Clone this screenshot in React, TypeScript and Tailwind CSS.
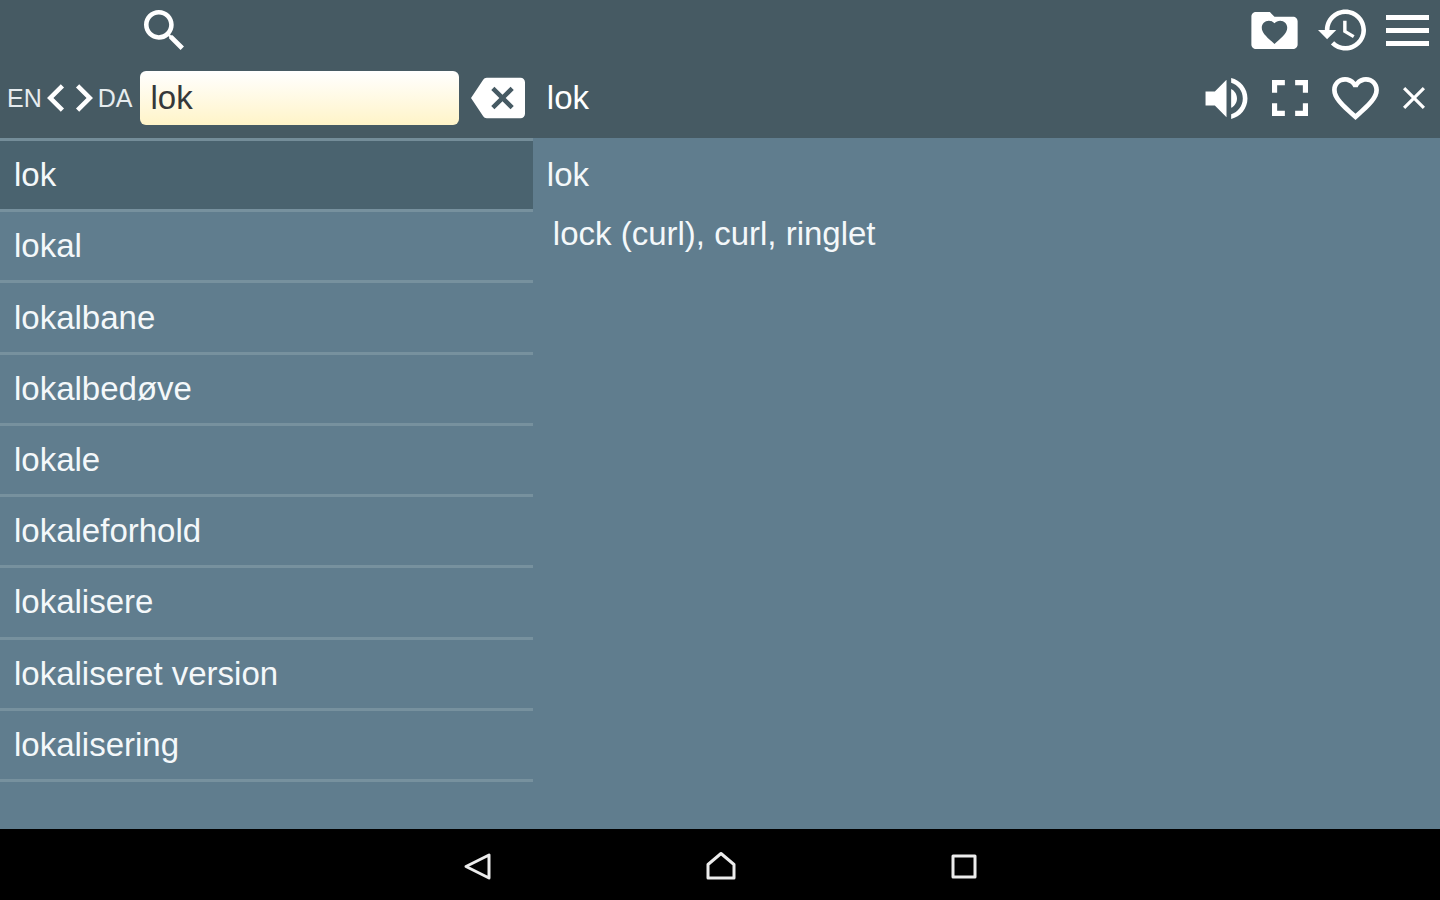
import React, { useState } from 'react';

const WORDS = [
  'lok',
  'lokal',
  'lokalbane',
  'lokalbedøve',
  'lokale',
  'lokaleforhold',
  'lokalisere',
  'lokaliseret version',
  'lokalisering',
];

const ICONS = {
  search: {
    box: '3 3 17.5 17.5',
    d: 'M15.5 14h-.79l-.28-.27C15.41 12.59 16 11.11 16 9.5 16 5.91 13.09 3 9.5 3S3 5.91 3 9.5 5.91 16 9.5 16c1.61 0 3.09-.59 4.23-1.57l.27.28v.79l5 4.99L20.49 19l-4.99-5zm-6 0C7.01 14 5 11.99 5 9.5S7.01 5 9.5 5 14 7.01 14 9.5 11.99 14 9.5 14z',
  },
  folder: {
    box: '2 4 20 16',
    d: 'M10 4H4c-1.1 0-1.99.9-1.99 2L2 18c0 1.1.9 2 2 2h16c1.1 0 2-.9 2-2V8c0-1.1-.9-2-2-2h-8l-2-2zM12 17.8l-.8-.72C8.38 14.52 6.5 12.83 6.5 10.76 6.5 9.07 7.83 7.75 9.53 7.75c.96 0 1.87.44 2.47 1.15.6-.71 1.51-1.15 2.47-1.15 1.7 0 3.03 1.32 3.03 3.01 0 2.07-1.88 3.76-4.7 6.32l-.8.72z',
  },
  history: {
    box: '1 3 21 18',
    d: 'M13 3c-4.97 0-9 4.03-9 9H1l3.89 3.89.07.14L9 12H6c0-3.87 3.13-7 7-7s7 3.13 7 7-3.13 7-7 7c-1.93 0-3.68-.79-4.94-2.06l-1.42 1.42C8.27 19.99 10.51 21 13 21c4.97 0 9-4.03 9-9s-4.03-9-9-9zm-1 5v5l4.28 2.54.72-1.21-3.5-2.08V8H12z',
  },
  menu: {
    box: '0 0 43 31',
    d: 'M0 0h43v5H0zM0 13h43v5H0zM0 26h43v5H0z',
  },
  swap: {
    box: '2 6 20 12',
    d: 'M9.4 16.6L4.8 12l4.6-4.6L8 6l-6 6 6 6 1.4-1.4zm5.2 0l4.6-4.6-4.6-4.6L16 6l6 6-6 6-1.4-1.4z',
  },
  clear: {
    box: '0 3 24 18',
    d: 'M22 3H7c-.69 0-1.23.35-1.59.88L0 12l5.41 8.11c.36.53.9.89 1.59.89h15c1.1 0 2-.9 2-2V5c0-1.1-.9-2-2-2zm-3 12.59L17.59 17 14 13.41 10.41 17 9 15.59 12.59 12 9 8.41 10.41 7 14 10.59 17.59 7 19 8.41 15.41 12 19 15.59z',
  },
  volume: {
    box: '3 3.2 18 17.6',
    d: 'M3 9v6h4l5 5V4L7 9H3zm13.5 3c0-1.77-1.02-3.29-2.5-4.03v8.05c1.48-.73 2.5-2.25 2.5-4.02zM14 3.23v2.06c2.89.86 5 3.54 5 6.71s-2.11 5.85-5 6.71v2.06c4.01-.91 7-4.49 7-8.77s-2.99-7.86-7-8.77z',
  },
  fullscreen: {
    box: '5 5 14 14',
    d: 'M7 14H5v5h5v-2H7v-3zm-2-4h2V7h3V5H5v5zm12 7h-3v2h5v-5h-2v3zM14 5v2h3v3h2V5h-5z',
  },
  heart: {
    box: '2 3 20 18.35',
    d: 'M16.5 3c-1.74 0-3.41.81-4.5 2.09C10.91 3.81 9.24 3 7.5 3 4.42 3 2 5.42 2 8.5c0 3.78 3.4 6.86 8.55 11.54L12 21.35l1.45-1.32C18.6 15.36 22 12.28 22 8.5 22 5.42 19.58 3 16.5 3zm-4.4 15.55l-.1.1-.1-.1C7.14 14.24 4 11.39 4 8.5 4 6.5 5.5 5 7.5 5c1.54 0 3.04.99 3.57 2.36h1.87C13.46 5.99 14.96 5 16.5 5c2 0 3.5 1.5 3.5 3.5 0 2.89-3.14 5.74-7.9 10.05z',
  },
  close: {
    box: '5 5 14 14',
    d: 'M19 6.41L17.59 5 12 10.59 6.41 5 5 6.41 10.59 12 5 17.59 6.41 19 12 13.41 17.59 19 19 17.59 13.41 12z',
  },
};

const Icon = ({ name, className }: { name: keyof typeof ICONS; className: string }) => (
  <svg viewBox={ICONS[name].box} fill="currentColor" fillRule="evenodd" className={className} aria-hidden="true">
    <path d={ICONS[name].d} />
  </svg>
);

const IconButton = ({
  name,
  label,
  className,
  onClick,
}: {
  name: keyof typeof ICONS;
  label: string;
  className: string;
  onClick?: () => void;
}) => (
  <button type="button" aria-label={label} onClick={onClick} className="shrink-0">
    <Icon name={name} className={className} />
  </button>
);

const NavButton = ({ label, d }: { label: string; d: string }) => (
  <button type="button" aria-label={label} className="flex w-[243px] items-center justify-center">
    <svg viewBox="0 0 32 32" className="size-8" fill="none" stroke="currentColor" strokeWidth="3" strokeLinejoin="round">
      <path d={d} />
    </svg>
  </button>
);

const App: React.FC = () => {
  const [query, setQuery] = useState('lok');
  const [selected, setSelected] = useState('lok');

  return (
    <div className="flex min-h-screen flex-col bg-[#607d8e] font-['Liberation_Sans',Arial,sans-serif] text-[33px] leading-10 text-[#f4f8fa]">
      <header className="bg-[#465a63] pb-0.5 text-white">
        <div className="flex h-[60px] items-center justify-between pr-[11px] pl-36">
          <IconButton name="search" label="Search" className="size-10" />
          <div className="flex items-center gap-5">
            <IconButton name="folder" label="Favorites" className="h-[37px] w-[47px]" />
            <IconButton name="history" label="History" className="h-[42px] w-[48px]" />
            <IconButton name="menu" label="Menu" className="h-[31px] w-[43px]" />
          </div>
        </div>

        <div className="flex h-[76px] items-center">
          <div className="flex w-[37%] items-center pr-2 pl-[7px]">
            <button
              type="button"
              aria-label="Swap languages EN DA"
              className="flex shrink-0 items-center gap-[5px] text-[25px] text-[#e6ecef]"
            >
              <span>EN</span>
              <Icon name="swap" className="h-[28px] w-[46px] text-white" />
              <span>DA</span>
            </button>
            <input
              type="text"
              aria-label="Search word"
              value={query}
              onChange={(e) => setQuery(e.target.value)}
              className="ml-2 h-[54px] min-w-0 flex-1 rounded-md bg-linear-to-b from-white to-[#fff4c8] px-2.5 text-[#35383a] outline-none"
            />
            <div className="ml-3 flex">
              <IconButton name="clear" label="Clear" className="h-[42px] w-[54px]" onClick={() => setQuery('')} />
            </div>
          </div>
          <div className="flex flex-1 items-center justify-between pr-[15px] pl-3.5">
            <h1>{selected}</h1>
            <div className="flex items-center gap-6">
              <IconButton name="volume" label="Listen" className="h-[41px] w-[43px]" />
              <IconButton name="fullscreen" label="Full screen" className="size-[36px]" />
              <IconButton name="heart" label="Add to favorites" className="h-[43px] w-[47px]" />
              <IconButton name="close" label="Close" className="size-[22px]" />
            </div>
          </div>
        </div>
      </header>

      <main className="flex flex-1">
        <ul className="flex w-[37%] flex-col border-t-3 border-[#748d99] pb-[47px]">
          {WORDS.map((word) => (
            <li key={word} className="flex flex-1 border-b-3 border-[#77919e]">
              <button
                type="button"
                onClick={() => setSelected(word)}
                className={`w-full px-3.5 text-left ${word === selected ? 'bg-[#4a636f]' : ''}`}
              >
                {word}
              </button>
            </li>
          ))}
        </ul>
        <article className="flex-1 px-3.5 pt-[17px]">
          <h2>lok</h2>
          <p className="mt-[19px] pl-1.5">lock (curl), curl, ringlet</p>
        </article>
      </main>

      <nav className="flex h-[71px] justify-center bg-black pt-0.5 text-[#ececec]">
        <NavButton label="Back" d="M28 5v23L5 16.500z" />
        <NavButton label="Home" d="M17 3.500L30 14.500v13.500H4V14.500z" />
        <NavButton label="Recent apps" d="M6 6h22v21H6z" />
      </nav>
    </div>
  );
};

export default App;
